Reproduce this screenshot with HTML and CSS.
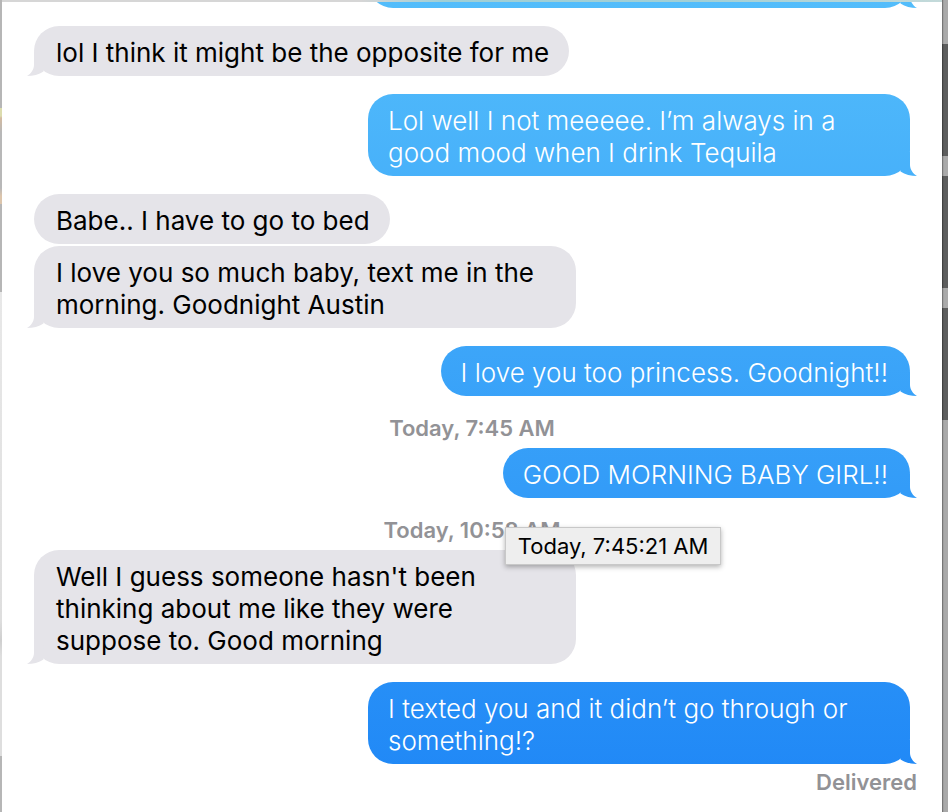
FILE: index.html
```html
<!DOCTYPE html>
<html lang="en">
<head>
<meta charset="utf-8">
<title>Messages</title>
<link rel="stylesheet" href="styles.css">
</head>
<body>
<div class="desktop">
  <div class="edge edge-left"></div>
  <main class="transcript">
    <div class="scrolled"><div class="bubble sent tail previous"></div></div>
    <p class="bubble received tail">lol I think it might be the opposite for me</p>
    <p class="bubble sent tail">Lol well I not meeeee. I’m always in a good mood when I drink Tequila</p>
    <p class="bubble received">Babe.. I have to go to bed</p>
    <p class="bubble received tail">I love you so much baby, text me in the morning. Goodnight Austin</p>
    <p class="bubble sent tail">I love you too princess. Goodnight!!</p>
    <time class="stamp">Today, 7:45 AM</time>
    <div class="hovered">
      <p class="bubble sent tail">GOOD MORNING BABY GIRL!!</p>
      <span class="tooltip" role="tooltip">Today, 7:45:21 AM</span>
    </div>
    <time class="stamp">Today, 10:58 AM</time>
    <p class="bubble received tail">Well I guess someone hasn't been thinking about me like they were suppose to. Good morning</p>
    <p class="bubble sent tail">I texted you and it didn’t go through or something!?</p>
    <div class="status">Delivered</div>
  </main>
  <div class="edge edge-right"></div>
</div>
</body>
</html>
```
FILE: styles.css
```css
* {
  box-sizing: border-box;
}

body {
  margin: 0;
  background: #fff;
  color: #000;
  font-family: Inter, "Liberation Sans", sans-serif;
  font-size: 26px;
  font-weight: 380;
  line-height: 32px;
}

.desktop {
  display: grid;
  grid-template-columns: 2px 1fr 6px;
  min-height: 100vh;
}

/* Slivers of the windows behind */
.edge-left {
  background: linear-gradient(#b6b6b6 108px, #dcdcae 108px 116px, #d4bba0 118px, #b8b8b8 132px 188px, #dcc5ac 196px 204px, #b6b6b6 204px 292px, #e8e8e8 292px, #dedede 620px, #cfcfcf 640px, #dedede 656px 756px, #b6b6b6 756px);
}

.edge-right {
  background:
    linear-gradient(90deg, rgba(0, 0, 0, 0.3) 1px, rgba(0, 0, 0, 0.06) 1px 2px, transparent 2px),
    linear-gradient(#aaa 44px, #5d5e5e 44px 156px, #aaa 156px 176px, #5d5e5e 176px 288px, #aaa 288px 308px, #5d5e5e 308px 420px, #a9a9a9 420px);
}

.transcript {
  display: flex;
  flex-direction: column;
  align-items: flex-start;
  padding: 0 32px;
  border-top: 2px solid;
  border-image: linear-gradient(90deg, #d6d6d6 360px, #9fcfd6 440px, #a2d0d6 700px, #c4dada) 2;
}

.scrolled {
  display: flex;
  align-items: flex-end;
  align-self: stretch;
  height: 6px;
  margin-right: -8px;
  padding-right: 8px;
  overflow: hidden;
}

.bubble {
  position: relative;
  max-width: 542px;
  margin: 18px 0 0;
  padding: 11px 20px 7px 22px;
  border-radius: 25px;
}

.received {
  background: #e5e4e9;
}

.received + .received {
  margin-top: 2px;
}

/* One gradient runs down the whole window, behind every sent bubble */
.sent,
.sent::after {
  background: linear-gradient(#53bdfb, #1e86f6) fixed;
}

.sent {
  align-self: flex-end;
  padding: 11px 22px 7px 20px;
  color: #fff;
  font-weight: 340;
}

.tail::after {
  content: "";
  position: absolute;
  bottom: 0;
  width: 24px;
  height: 24px;
}

.sent.tail::after {
  right: -7px;
  clip-path: path("M17 0V13C17 17 20 22 24 24C18 24 12 22.5 7.5 19.5L7 0Z");
}

.received.tail::after {
  left: -7px;
  background: #e5e4e9;
  clip-path: path("M7 0V13C7 17 4 22 0 24C6 24 12 22.5 16.5 19.5L17 0Z");
}

.previous {
  flex: none;
  width: 542px;
  height: 50px;
  margin: 0 0 0 auto;
}

.stamp,
.status {
  color: #929296;
  font-size: 22px;
  font-weight: 600;
}

.stamp {
  align-self: center;
  margin: 16px 0 4px;
}

.stamp + .bubble,
.hovered .bubble {
  margin-top: 0;
}

.hovered {
  position: relative;
  align-self: flex-end;
}

.tooltip {
  position: absolute;
  z-index: 1;
  top: 79px;
  left: 2px;
  padding: 2px 12px;
  border: 1px solid #c8c8c8;
  background: #eee;
  box-shadow: 0 2px 5px rgba(0, 0, 0, 0.3);
  font-size: 22px;
  font-weight: 400;
  white-space: nowrap;
}

.status {
  align-self: flex-end;
  margin: 2px -7px 0 0;
}
```
